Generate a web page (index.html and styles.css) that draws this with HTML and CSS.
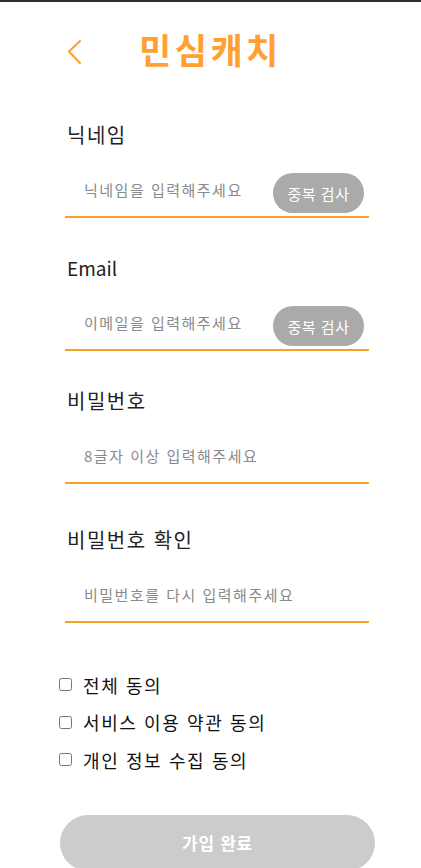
FILE: index.html
```html
<!DOCTYPE html>
<html lang="ko">
<head>
<meta charset="utf-8">
<title>민심캐치 - 회원가입</title>
<link rel="stylesheet" href="styles.css">
</head>
<body>
<div class="page">
  <header class="header">
    <button class="back" type="button" aria-label="뒤로">
      <svg width="16" height="26" viewBox="0 0 16 26"><polyline points="14,2 3,12.5 14,24" fill="none" stroke="#FFA033" stroke-width="2.2" stroke-linecap="round" stroke-linejoin="round"/></svg>
    </button>
    <h1 class="title">민심캐치</h1>
  </header>

  <form class="form">
    <div class="field">
      <label class="label">닉네임</label>
      <div class="row">
        <input class="input" type="text" placeholder="닉네임을 입력해주세요">
        <button class="check" type="button">중복 검사</button>
      </div>
    </div>
    <div class="field">
      <label class="label label-latin">Email</label>
      <div class="row">
        <input class="input" type="text" placeholder="이메일을 입력해주세요">
        <button class="check" type="button">중복 검사</button>
      </div>
    </div>
    <div class="field">
      <label class="label">비밀번호</label>
      <div class="row">
        <input class="input" type="password" placeholder="8글자 이상 입력해주세요">
      </div>
    </div>
    <div class="field field-last">
      <label class="label">비밀번호 확인</label>
      <div class="row">
        <input class="input" type="password" placeholder="비밀번호를 다시 입력해주세요">
      </div>
    </div>

    <div class="agree">
      <label class="agree-row"><input type="checkbox" class="cb"><span>전체 동의</span></label>
      <label class="agree-row"><input type="checkbox" class="cb"><span>서비스 이용 약관 동의</span></label>
      <label class="agree-row"><input type="checkbox" class="cb"><span>개인 정보 수집 동의</span></label>
    </div>

    <button class="submit" type="button">가입 완료</button>
  </form>
</div>
</body>
</html>
```
FILE: styles.css
```css
html, body {
  margin: 0;
  padding: 0;
  background: #fff;
}
body {
  border-top: 2px solid #2f2f2f;
  font-family: "Noto Sans CJK KR", "Noto Sans", sans-serif;
  color: #222;
  overflow: hidden;
}
.header {
  display: flex;
  align-items: center;
  padding: 25px 0 0 66px;
  height: 44px;
}
.back {
  border: 0;
  background: none;
  padding: 0;
  margin: 5px 0 0 0;
  width: 16px;
  height: 26px;
  display: flex;
}
.title {
  margin: 0 0 0 57px;
  font-size: 35px;
  line-height: 44px;
  font-weight: 700;
  letter-spacing: 3.5px;
  color: #FFA033;
}
.form {
  display: flex;
  flex-direction: column;
  margin-top: 52px;
}
.field {
  display: flex;
  flex-direction: column;
  margin-left: 65px;
  width: 304px;
  margin-bottom: 38px;
}
.field-last {
  margin-bottom: 0;
}
.field + .field-last {
  margin-top: 6px;
}
.label {
  font-size: 20px;
  line-height: 24px;
  padding-left: 2px;
  letter-spacing: 1.5px;
  color: #222;
}
.label-latin {
  font-size: 19px;
  letter-spacing: 0;
}
.row {
  margin-top: 26px;
  display: flex;
  align-items: flex-end;
  padding-bottom: 3px;
  border-bottom: 2px solid #F9A02A;
}
.input {
  flex: 1;
  min-width: 0;
  height: 40px;
  box-sizing: border-box;
  padding: 0 0 7px 19px;
  border: 0;
  outline: none;
  font-family: inherit;
  font-size: 15px;
  letter-spacing: 1.5px;
  color: #333;
  background: transparent;
}
.input::placeholder {
  color: #8a8a8a;
}
.check {
  width: 91px;
  height: 40px;
  margin-right: 5px;
  border: 0;
  border-radius: 20px;
  background: #AAAAAA;
  color: #fff;
  font-family: inherit;
  font-size: 15px;
  letter-spacing: 0.5px;
  padding: 0;
}
.agree {
  display: flex;
  flex-direction: column;
  margin: 43px 0 0 55px;
}
.agree-row {
  display: flex;
  align-items: center;
  height: 37.5px;
  font-size: 18px;
  letter-spacing: 1.6px;
  color: #111;
}
.cb {
  margin: 0 11px 0 4px;
  width: 13px;
  height: 13px;
}
.submit {
  margin: 36px 0 0 60px;
  width: 315px;
  height: 56px;
  border: 0;
  border-radius: 28px;
  background: #CCCCCC;
  color: #fff;
  font-family: inherit;
  font-size: 17px;
  font-weight: 700;
  letter-spacing: 0.7px;
}
```
